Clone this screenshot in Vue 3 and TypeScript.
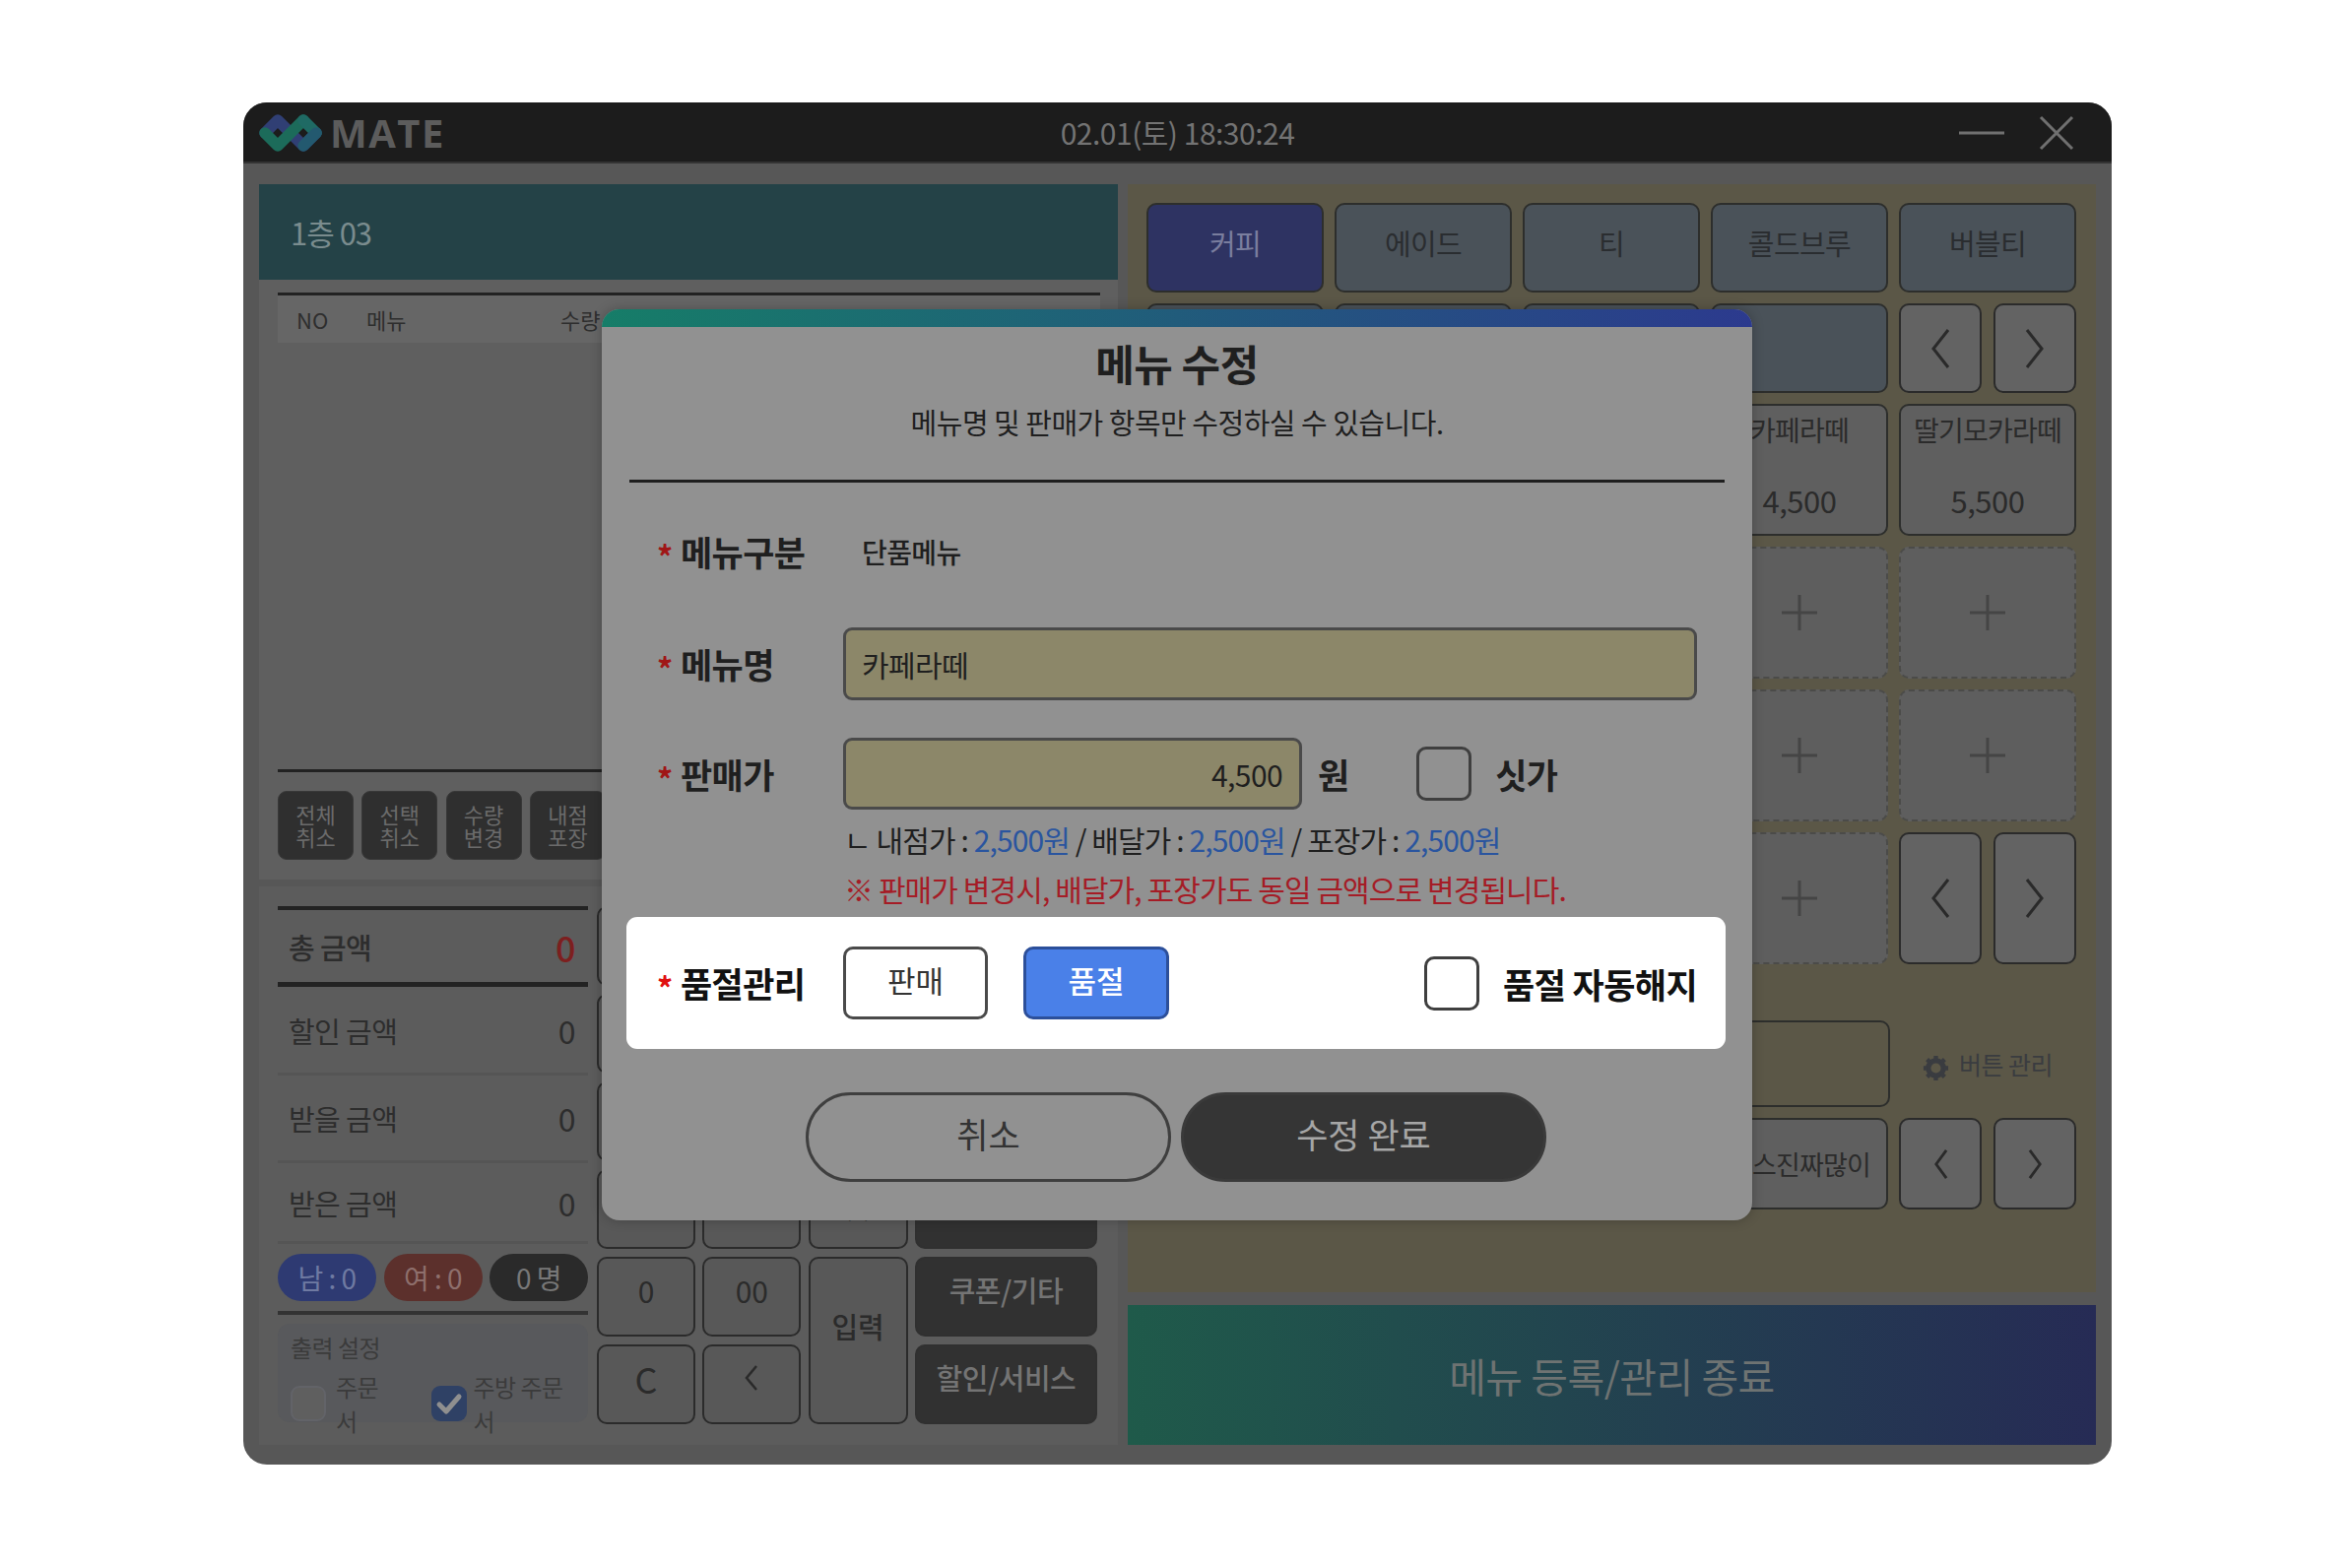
<script setup lang="ts">
  interface MenuCell {
    name?: string
    price?: string
    kind: 'cat' | 'cat-on' | 'item' | 'empty' | 'arrows' | 'option'
    small?: boolean
  }

  const orderCols = ['NO', '메뉴', '수량', '금액', '할인', '비고']
  const orderActions = [
    ['전체', '취소'],
    ['선택', '취소'],
    ['수량', '변경'],
    ['내점', '포장'],
    ['테이블', '이동'],
    ['주문', '보류'],
    ['영수증', '출력'],
    ['주방', '출력'],
    ['결제', '내역'],
    ['기타', '메뉴'],
  ]

  const summary = [
    { label: '할인 금액', value: '0', h: 'row-a' },
    { label: '받을 금액', value: '0', h: 'row-b' },
    { label: '받은 금액', value: '0', h: 'row-c' },
  ]

  const keys = ['7', '8', '9', '4', '5', '6', '1', '2', '3']
  const darkKeys = ['현금', '카드', '간편결제', '포인트']

  const cells: MenuCell[] = [
    { kind: 'cat-on', name: '커피' },
    { kind: 'cat', name: '에이드' },
    { kind: 'cat', name: '티' },
    { kind: 'cat', name: '콜드브루' },
    { kind: 'cat', name: '버블티' },
    { kind: 'cat' },
    { kind: 'cat' },
    { kind: 'cat' },
    { kind: 'cat' },
    { kind: 'arrows' },
    { kind: 'item', name: '아메리카노', price: '3,500' },
    { kind: 'item', name: '바닐라라떼', price: '4,500' },
    { kind: 'item', name: '카라멜라떼', price: '4,500' },
    { kind: 'item', name: '카페라떼', price: '4,500' },
    { kind: 'item', name: '딸기모카라떼', price: '5,500' },
    ...Array.from({ length: 14 }, (): MenuCell => ({ kind: 'empty' })),
    { kind: 'arrows' },
  ]

  const options = ['얼음많이', '낭낭히', '소스많이', '소스진짜많이']
</script>

<template>
  <div class="page">
    <div class="window">
      <header class="titlebar">
        <div class="brand">
          <svg class="logo" viewBox="0 0 64 40" width="64" height="40" fill="none" stroke-width="11.5" stroke-linejoin="round" stroke-linecap="round">
            <path d="M6 20 19 7 45 33 58 20" stroke="#303f74" />
            <path d="M6 20 19 33 45 7" stroke="#1c6b5a" />
            <path d="M45 7 58 20" stroke="#1f6a64" />
            <path d="M58 20 45 33" stroke="#23596f" />
          </svg>
          <span class="brand-name">MATE</span>
        </div>
        <div class="clock">02.01(토) 18:30:24</div>
        <div class="win-ctrl">
          <svg viewBox="0 0 46 4" width="46" height="4"><path d="M0 2h46" stroke="#707070" stroke-width="3" /></svg>
          <svg viewBox="0 0 36 36" width="36" height="36"><path d="M2 2 34 34M34 2 2 34" stroke="#707070" stroke-width="3" fill="none" /></svg>
        </div>
      </header>

      <div class="body">
        <section class="left">
          <div class="table-name">1층 03</div>

          <div class="order-panel">
            <div class="order-head">
              <span v-for="c in orderCols" :key="c" class="order-col">{{ c }}</span>
            </div>
            <div class="order-list"></div>
            <div class="order-actions">
              <button v-for="a in orderActions" :key="a[0]" class="mini-btn">{{ a[0] }}<br />{{ a[1] }}</button>
            </div>
          </div>

          <div class="pay-panel">
            <div class="summary">
              <div class="sum-row total">
                <span>총 금액</span>
                <span class="total-val">0</span>
              </div>
              <div v-for="s in summary" :key="s.label" class="sum-row" :class="s.h">
                <span>{{ s.label }}</span>
                <span class="sum-val">{{ s.value }}</span>
              </div>
              <div class="pills">
                <span class="pill male">남 : 0</span>
                <span class="pill female">여 : 0</span>
                <span class="pill count">0 명</span>
              </div>
              <div class="print-box">
                <div class="print-title">출력 설정</div>
                <div class="print-opts">
                  <span class="tick"></span>
                  <span class="print-label first">주문서</span>
                  <span class="tick on">
                    <svg viewBox="0 0 36 36" width="36" height="36" fill="none"><path d="M8 19l7 7 13-15" stroke="#8f8f8f" stroke-width="5" stroke-linecap="round" stroke-linejoin="round" /></svg>
                  </span>
                  <span class="print-label">주방 주문서</span>
                </div>
              </div>
            </div>

            <div class="keypad">
              <button v-for="k in keys" :key="k" class="key">{{ k }}</button>
              <button class="key dark dark-top">{{ darkKeys[0] }}</button>
              <button class="key dark dark-top2">{{ darkKeys[1] }}</button>
              <button class="key dark dark-top3">{{ darkKeys[2] }}</button>
              <button class="key dark dark-top4">{{ darkKeys[3] }}</button>
              <button class="key k-extra">+</button>
              <button class="key k-extra">-</button>
              <button class="key k-extra">×</button>
              <button class="key k-num">0</button>
              <button class="key k-num">00</button>
              <button class="key enter">입력</button>
              <button class="key dark strong">쿠폰/기타</button>
              <button class="key k-c">C</button>
              <button class="key k-back">
                <svg viewBox="0 0 14 28" width="14" height="28" fill="none"><path d="M12 2 2 14l10 12" stroke="#2a2a2a" stroke-width="2.5" /></svg>
              </button>
              <button class="key dark strong">할인/서비스</button>
            </div>
          </div>
        </section>

        <section class="right">
          <div class="menu-panel">
            <div class="menu-grid">
              <template v-for="(cell, i) in cells" :key="i">
                <div v-if="cell.kind === 'arrows'" class="arrow-pair">
                  <button class="arrow-btn">
                    <svg viewBox="0 0 20 40" width="20" height="40" fill="none"><path d="M18 1 3 20l15 19" stroke="#2a2a2a" stroke-width="3" /></svg>
                  </button>
                  <button class="arrow-btn">
                    <svg viewBox="0 0 20 40" width="20" height="40" fill="none"><path d="M2 1l15 19L2 39" stroke="#2a2a2a" stroke-width="3" /></svg>
                  </button>
                </div>
                <div v-else-if="cell.kind === 'empty'" class="cell empty">
                  <svg viewBox="0 0 36 36" width="36" height="36"><path d="M18 0v36M0 18h36" stroke="#454545" stroke-width="3" /></svg>
                </div>
                <div v-else-if="cell.kind === 'item'" class="cell item">
                  <span class="item-name">{{ cell.name }}</span>
                  <span class="item-price">{{ cell.price }}</span>
                </div>
                <div v-else class="cell cat" :class="{ active: cell.kind === 'cat-on' }">{{ cell.name }}</div>
              </template>

              <div class="option-box"></div>
              <div class="manage">
                <svg viewBox="0 0 28 28" width="27" height="27" fill="none" stroke="#3a3c40">
                  <circle cx="14" cy="14" r="8" stroke-width="5.5" />
                  <path d="M14 1v5M14 22v5M1 14h5M22 14h5M4.8 4.8l3.5 3.5M19.7 19.7l3.5 3.5M4.8 23.2l3.5-3.5M19.7 8.300l3.5-3.5" stroke-width="4.5" />
                </svg>
                <span>버튼 관리</span>
              </div>

              <div v-for="o in options" :key="o" class="cell option">{{ o }}</div>
              <div class="arrow-pair">
                <button class="arrow-btn">
                  <svg viewBox="0 0 16 32" width="15" height="30" fill="none"><path d="M14 1 3 16l11 15" stroke="#2a2a2a" stroke-width="3" /></svg>
                </button>
                <button class="arrow-btn">
                  <svg viewBox="0 0 16 32" width="15" height="30" fill="none"><path d="M2 1l11 15L2 31" stroke="#2a2a2a" stroke-width="3" /></svg>
                </button>
              </div>
            </div>
          </div>
          <button class="finish">메뉴 등록/관리 종료</button>
        </section>
      </div>

      <div class="modal">
        <div class="modal-bar"></div>
        <div class="modal-head">
          <h2 class="modal-title">메뉴 수정</h2>
          <p class="modal-sub">메뉴명 및 판매가 항목만 수정하실 수 있습니다.</p>
        </div>

        <div class="form">
          <div class="form-row row-kind">
            <label class="form-label"><i class="star">*</i>메뉴구분</label>
            <span class="kind-val">단품메뉴</span>
          </div>

          <div class="form-row row-name">
            <label class="form-label"><i class="star">*</i>메뉴명</label>
            <div class="field name-field">카페라떼</div>
          </div>

          <div class="form-row row-price">
            <label class="form-label"><i class="star">*</i>판매가</label>
            <div class="field price-field">4,500</div>
            <span class="unit">원</span>
            <span class="check"></span>
            <span class="check-label">싯가</span>
          </div>

          <div class="price-note">
            ㄴ 내점가 : <b>2,500원</b> / 배달가 : <b>2,500원</b> / 포장가 : <b>2,500원</b>
          </div>
          <div class="warn-note">※ 판매가 변경시, 배달가, 포장가도 동일 금액으로 변경됩니다.</div>

          <div class="form-row highlight">
            <label class="form-label"><i class="star">*</i>품절관리</label>
            <button class="toggle">판매</button>
            <button class="toggle on">품절</button>
            <span class="check"></span>
            <span class="check-label">품절 자동해지</span>
          </div>
        </div>

        <div class="modal-foot">
          <button class="pill-btn cancel">취소</button>
          <button class="pill-btn save">수정 완료</button>
        </div>
      </div>
    </div>
  </div>
</template>

<style>
  html,
  body {
    margin: 0;
    background: #fff;
  }
</style>

<style scoped>
  .page {
    width: 2388px;
    height: 1592px;
    box-sizing: border-box;
    padding: 104px 0 0 247px;
    font-family: 'Noto Sans CJK KR', 'Noto Sans', sans-serif;
    overflow: hidden;
  }

  button {
    font-family: inherit;
    padding: 0;
    cursor: pointer;
  }

  .window {
    position: relative;
    width: 1897px;
    height: 1383px;
    border-radius: 24px;
    overflow: hidden;
    background: #575757;
    display: flex;
    flex-direction: column;
  }

  /* 타이틀바 */
  .titlebar {
    position: relative;
    height: 62px;
    flex-shrink: 0;
    box-sizing: border-box;
    background: #1c1c1c;
    border-bottom: 2px solid #333;
    display: flex;
    align-items: center;
    justify-content: center;
  }

  .brand {
    position: absolute;
    left: 16px;
    top: 11px;
    display: flex;
    align-items: center;
    gap: 8px;
  }

  .brand-name {
    font-family: 'Open Sans', sans-serif;
    font-weight: 700;
    font-size: 40px;
    line-height: 40px;
    letter-spacing: 1.5px;
    color: #5c5c5c;
  }

  .clock {
    font-size: 30px;
    letter-spacing: -0.5px;
    color: #737373;
  }

  .win-ctrl {
    position: absolute;
    right: 38px;
    top: 13px;
    display: flex;
    align-items: center;
    gap: 35px;
  }

  .body {
    flex: 1;
    display: flex;
    gap: 10px;
    padding: 21px 16px 20px;
  }

  .left {
    width: 872px;
    display: flex;
    flex-direction: column;
  }

  .table-name {
    height: 97px;
    flex-shrink: 0;
    box-sizing: border-box;
    padding-left: 32px;
    display: flex;
    align-items: center;
    background: #244247;
    color: #7a8c8e;
    font-size: 31px;
    letter-spacing: -1px;
  }

  /* 주문 내역 */
  .order-panel {
    height: 609px;
    flex-shrink: 0;
    box-sizing: border-box;
    background: #5f5f5f;
    padding: 13px 18px 20px 19px;
    display: flex;
    flex-direction: column;
  }

  .order-head {
    position: relative;
    height: 48px;
    flex-shrink: 0;
    border-top: 3px solid #222;
    background: #666;
    color: #2e2e2e;
    font-size: 22px;
  }

  .order-col {
    position: absolute;
    top: 9px;
    line-height: 30px;
  }

  .order-col:nth-child(1) { left: 19px; }
  .order-col:nth-child(2) { left: 90px; }
  .order-col:nth-child(3) { left: 287px; }
  .order-col:nth-child(4) { left: 485px; }
  .order-col:nth-child(5) { left: 580px; }
  .order-col:nth-child(6) { left: 730px; }

  .order-list {
    flex: 1;
    border-bottom: 3px solid #222;
    margin-bottom: 19px;
  }

  .order-actions {
    display: flex;
    gap: 8.300px;
    overflow: hidden;
  }

  .mini-btn {
    width: 77px;
    height: 70px;
    flex-shrink: 0;
    border: 1px solid #383838;
    border-radius: 9px;
    background: #2f2f2f;
    color: #6b6b6b;
    font-size: 22px;
    line-height: 23px;
  }

  /* 결제 영역 */
  .pay-panel {
    flex: 1;
    margin-top: 7px;
    background: #5c5c5c;
    padding: 20px 18px 0 19px;
    display: flex;
    gap: 9px;
  }

  .summary {
    width: 315px;
    flex-shrink: 0;
  }

  .sum-row {
    box-sizing: border-box;
    display: flex;
    align-items: center;
    justify-content: space-between;
    padding: 0 13px 0 11px;
    font-size: 29px;
    letter-spacing: -0.6px;
    color: #2d2d2d;
    border-bottom: 3px solid #555;
  }

  .sum-row.total {
    height: 82px;
    border-top: 4px solid #232323;
    border-bottom: 5px solid #232323;
    font-weight: 500;
  }

  .row-a { height: 90px; }
  .row-b { height: 89px; }
  .row-c { height: 82px; }

  .total-val {
    font-size: 36px;
    color: #7d1f1f;
  }

  .sum-val {
    font-size: 32px;
  }

  .pills {
    display: flex;
    justify-content: space-between;
    padding-top: 10px;
    padding-bottom: 10px;
    border-bottom: 4px solid #333;
  }

  .pill {
    width: 100px;
    height: 48px;
    border-radius: 24px;
    display: flex;
    align-items: center;
    justify-content: center;
    font-size: 28px;
    letter-spacing: -0.5px;
  }

  .male { background: #2e3a72; color: #6f7aa2; }
  .female { background: #5c302c; color: #8e6f6c; }
  .count { background: #2a2a2a; color: #787878; }

  .print-box {
    margin-top: 9px;
    height: 100px;
    box-sizing: border-box;
    border-radius: 12px;
    background: #58595c;
    padding: 10px 13px;
  }

  .print-title {
    font-size: 24px;
    line-height: 28px;
    letter-spacing: -0.5px;
    color: #3b3b3b;
  }

  .print-opts {
    margin-top: 8px;
    display: flex;
    align-items: center;
    font-size: 24px;
    letter-spacing: -0.5px;
    color: #3b3b3b;
  }

  .print-label.first {
    margin-left: 10px;
    margin-right: 38px;
  }

  .tick {
    width: 36px;
    height: 36px;
    flex-shrink: 0;
    box-sizing: border-box;
    border: 2px solid #626368;
    border-radius: 9px;
    background: #5f5f5f;
    margin-right: 6px;
  }

  .tick:first-child {
    margin-right: 0;
  }

  .tick.on {
    border: none;
    background: #2f4165;
  }

  .keypad {
    flex: 1;
    display: grid;
    grid-template-columns: 100px 100px 101px 185px;
    grid-auto-rows: 81px;
    column-gap: 7.300px;
    row-gap: 8px;
    align-content: start;
  }

  .key {
    box-sizing: border-box;
    border: 2px solid #2b2b2b;
    border-radius: 10px;
    background: #585858;
    color: #2b2b2b;
    font-size: 30px;
    display: flex;
    align-items: center;
    justify-content: center;
  }

  .key.dark {
    border-color: #303030;
    background: #313131;
    color: #747474;
    font-size: 29px;
    letter-spacing: -0.5px;
    padding-bottom: 16px;
  }

  .key.strong {
    font-weight: 500;
  }

  .key.dark-top { grid-column: 4; grid-row: 1; }
  .key.dark-top2 { grid-column: 4; grid-row: 2; }
  .key.dark-top3 { grid-column: 4; grid-row: 3; }
  .key.dark-top4 { grid-column: 4; grid-row: 4; }

  .key.k-num,
  .key.k-c,
  .key.k-back {
    padding-bottom: 14px;
  }

  .key.k-c {
    font-size: 36px;
  }

  .key.enter {
    grid-row: span 2;
    font-weight: 500;
    font-size: 29px;
    padding-bottom: 30px;
  }

  /* 메뉴 영역 */
  .right {
    width: 983px;
    display: flex;
    flex-direction: column;
    gap: 13px;
  }

  .menu-panel {
    height: 1125px;
    flex-shrink: 0;
    box-sizing: border-box;
    background: #5b5747;
    padding: 19px 19px 10px;
  }

  .menu-grid {
    display: grid;
    grid-template-columns: repeat(5, 180px);
    grid-template-rows: 91px 91px repeat(5, 134px) 93px 63px;
    gap: 11px;
  }

  .cell {
    box-sizing: border-box;
    border: 2px solid #2d2e2c;
    border-radius: 10px;
    display: flex;
    align-items: center;
    justify-content: center;
  }

  .cat {
    background: #4a5259;
    color: #2a2d30;
    font-size: 29px;
    letter-spacing: -0.6px;
    padding-bottom: 12px;
  }

  .cat.active {
    background: #2e3362;
    color: #7a7e9e;
  }

  .item {
    flex-direction: column;
    justify-content: flex-start;
    background: #5f5f5f;
    color: #2b2b2b;
  }

  .item-name {
    margin-top: 4px;
    font-size: 28px;
    letter-spacing: -0.8px;
    line-height: 40px;
    white-space: nowrap;
  }

  .item-price {
    margin-top: 32px;
    font-size: 31px;
    line-height: 40px;
    letter-spacing: -0.5px;
  }

  .empty {
    background: #5e5e5e;
    border: 2px dashed #4b4b49;
  }

  .arrow-pair {
    display: flex;
    justify-content: space-between;
  }

  .arrow-btn {
    width: 84px;
    box-sizing: border-box;
    border: 2px solid #2b2b2b;
    border-radius: 10px;
    background: #636363;
    display: flex;
    align-items: center;
    justify-content: center;
  }

  .option-box {
    grid-column: span 4;
    align-self: end;
    height: 88px;
    box-sizing: border-box;
    border: 2px solid #2d2e2c;
    border-radius: 10px;
    margin-right: -2px;
  }

  .manage {
    display: flex;
    align-items: flex-end;
    justify-content: center;
    gap: 10px;
    padding-bottom: 26px;
    box-sizing: border-box;
    font-size: 25px;
    letter-spacing: -0.5px;
    color: #3a3c40;
  }

  .option {
    background: #5f5f5f;
    color: #2b2b2b;
    font-size: 27px;
    letter-spacing: -0.8px;
    white-space: nowrap;
  }

  .finish {
    flex: 1;
    border: none;
    background: linear-gradient(90deg, #1f5a4a, #262b55);
    color: #6e7372;
    font-size: 41px;
    letter-spacing: -0.5px;
  }

  /* 수정 모달 */
  .modal {
    position: absolute;
    left: 364px;
    top: 210px;
    width: 1168px;
    height: 925px;
    border-radius: 18px;
    overflow: hidden;
    background: #919191;
    box-shadow: 0 0 12px rgba(0, 0, 0, 0.25);
    color: #1f1f1f;
  }

  .modal-bar {
    height: 18px;
    background: linear-gradient(90deg, #167d68, #2c3a8e);
  }

  .modal-head {
    height: 158px;
    box-sizing: border-box;
    margin: 0 28px;
    border-bottom: 3px solid #1f1f1f;
    text-align: center;
  }

  .modal-title {
    margin: 0;
    padding-top: 6px;
    font-size: 43px;
    font-weight: 700;
    line-height: 60px;
    letter-spacing: -0.5px;
  }

  .modal-sub {
    margin: 8px 0 0;
    font-size: 29px;
    line-height: 44px;
    letter-spacing: -0.5px;
  }

  .form {
    padding: 34px 27px 0 25px;
  }

  .form-row {
    display: flex;
    align-items: center;
    padding: 0 29px 0 31px;
  }

  .form-label {
    width: 189px;
    flex-shrink: 0;
    display: flex;
    align-items: center;
    font-size: 35px;
    font-weight: 700;
    letter-spacing: -0.6px;
    line-height: 50px;
  }

  .star {
    width: 24px;
    font-style: normal;
    font-size: 32px;
    color: #a01616;
    padding-top: 8px;
  }

  .row-kind { height: 72px; margin-bottom: 41px; }
  .row-name { height: 74px; margin-bottom: 38px; }
  .row-price { height: 73px; }

  .kind-val {
    font-size: 28px;
    font-weight: 500;
    letter-spacing: -0.6px;
    padding-left: 19px;
  }

  .field {
    height: 100%;
    box-sizing: border-box;
    border: 3px solid #4a4a4a;
    border-radius: 9px;
    background: #8c8769;
    display: flex;
    align-items: center;
    font-size: 30px;
    letter-spacing: -0.6px;
  }

  .name-field {
    flex: 1;
    padding-left: 16px;
  }

  .price-field {
    width: 466px;
    flex-shrink: 0;
    justify-content: flex-end;
    padding-right: 17px;
  }

  .unit {
    margin-left: 16px;
    font-size: 35px;
    font-weight: 700;
  }

  .check {
    width: 56px;
    height: 55px;
    flex-shrink: 0;
    box-sizing: border-box;
    border: 3px solid #3f3f3f;
    border-radius: 10px;
    margin-left: auto;
    margin-right: 24px;
  }

  .row-price .check {
    margin-left: 68px;
  }

  .check-label {
    font-size: 35px;
    font-weight: 700;
    letter-spacing: -0.6px;
    white-space: nowrap;
  }

  .price-note {
    margin: 10px 0 0 221px;
    height: 40px;
    line-height: 40px;
    font-size: 30px;
    letter-spacing: -0.9px;
    white-space: nowrap;
  }

  .price-note b {
    font-weight: 400;
    color: #2a559f;
  }

  .warn-note {
    margin: 10px 0 0 221px;
    height: 40px;
    line-height: 40px;
    font-size: 30px;
    letter-spacing: -0.9px;
    color: #a51c26;
    white-space: nowrap;
  }

  .highlight {
    margin-top: 9px;
    height: 134px;
    box-sizing: border-box;
    border-radius: 11px;
    background: #fff;
    color: #111;
  }

  .highlight .star {
    color: #e01010;
  }

  .toggle {
    width: 147px;
    height: 74px;
    flex-shrink: 0;
    box-sizing: border-box;
    border: 3px solid #4a4a4a;
    border-radius: 10px;
    background: #fff;
    color: #333;
    font-size: 31px;
    padding-bottom: 8px;
  }

  .toggle.on {
    margin-left: 36px;
    width: 148px;
    border-color: #2c4f9a;
    background: #4a80e8;
    color: #fff;
    font-weight: 500;
  }

  .modal-foot {
    margin-top: 44px;
    display: flex;
    justify-content: center;
    gap: 10px;
    padding-right: 2px;
  }

  .pill-btn {
    width: 371px;
    height: 91px;
    box-sizing: border-box;
    border-radius: 46px;
    font-size: 35px;
    padding-bottom: 8px;
  }

  .cancel {
    border: 3px solid #3f3f3f;
    background: transparent;
    color: #333;
  }

  .save {
    border: 3px solid #3a3a3a;
    background: #353535;
    color: #a6a6a6;
  }
</style>
